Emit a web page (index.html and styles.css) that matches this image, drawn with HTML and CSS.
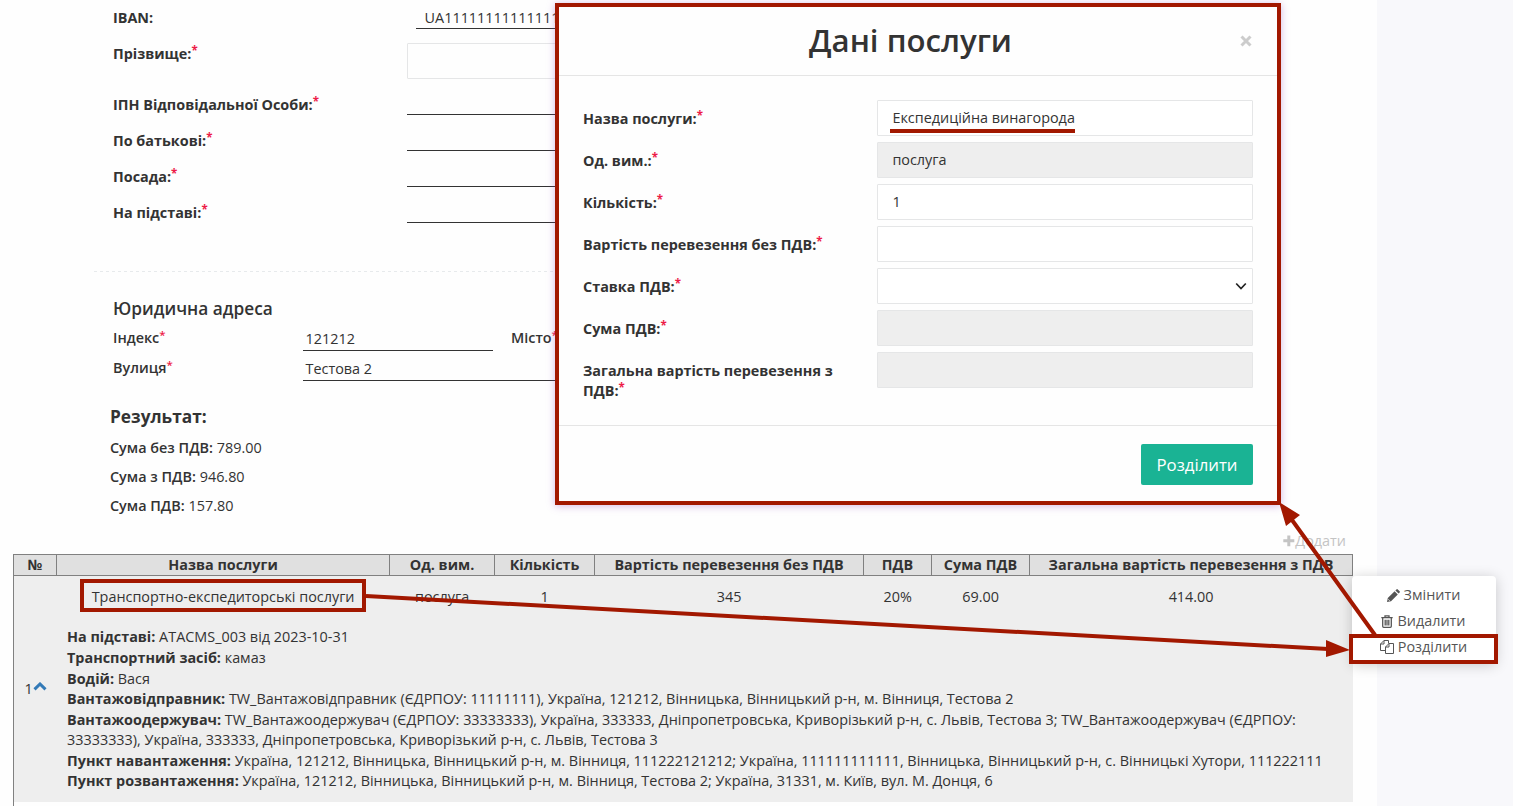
FILE: index.html
```html
<!DOCTYPE html>
<html lang="uk">
<head>
<meta charset="utf-8">
<title>Дані послуги</title>
<link rel="stylesheet" href="styles.css">
</head>
<body>
<main class="page">
  <section class="form">
    <div class="row"><b class="label">IBAN:</b><span class="field iban">UA111111111111111111111111111</span></div>
    <div class="row tall"><b class="label">Прізвище:<sup>*</sup></b><span class="field box"></span></div>
    <div class="row"><b class="label">ІПН Відповідальної Особи:<sup>*</sup></b><span class="field"></span></div>
    <div class="row"><b class="label">По батькові:<sup>*</sup></b><span class="field"></span></div>
    <div class="row"><b class="label">Посада:<sup>*</sup></b><span class="field"></span></div>
    <div class="row"><b class="label">На підставі:<sup>*</sup></b><span class="field"></span></div>
  </section>
  <div class="divider"></div>
  <section class="address">
    <h3>Юридична адреса</h3>
    <div class="addr-row"><span class="addr-label">Індекс<sup>*</sup></span><span class="addr-field short">121212</span><span class="addr-label city">Місто<sup>*</sup></span></div>
    <div class="addr-row"><span class="addr-label">Вулиця<sup>*</sup></span><span class="addr-field long">Тестова 2</span></div>
  </section>
  <section class="result">
    <h3>Результат:</h3>
    <p><b>Сума без ПДВ:</b> 789.00</p>
    <p><b>Сума з ПДВ:</b> 946.80</p>
    <p><b>Сума ПДВ:</b> 157.80</p>
  </section>
  <div class="add"><svg width="12" height="12" viewBox="0 0 12 12"><path d="M4.300 .5h3v3.800h4v3h-4v4h-3v-4h-4v-3h4z" fill="#c4c4c4"/></svg><span>Додати</span></div>
  <section class="table">
    <div class="thead cols">
      <span>№</span><span>Назва послуги</span><span>Од. вим.</span><span>Кількість</span><span>Вартість перевезення без ПДВ</span><span>ПДВ</span><span>Сума ПДВ</span><span>Загальна вартість перевезення з ПДВ</span>
    </div>
    <div class="tbody">
      <div class="num">1<svg width="14" height="9" viewBox="0 0 14 9"><path d="M1.500 7.300 7 2l5.500 5.300" fill="none" stroke="#337ab7" stroke-width="3"/></svg></div>
      <div class="content">
        <div class="values">
          <span>Транспортно-експедиторські послуги</span><span>послуга</span><span>1</span><span>345</span><span>20%</span><span>69.00</span><span>414.00</span>
        </div>
        <div class="details">
          <div><b>На підставі:</b> ATACMS_003 від 2023-10-31</div>
          <div><b>Транспортний засіб:</b> камаз</div>
          <div><b>Водій:</b> Вася</div>
          <div><b>Вантажовідправник:</b> TW_Вантажовідправник (ЄДРПОУ: 11111111), Україна, 121212, Вінницька, Вінницький р-н, м. Вінниця, Тестова 2</div>
          <div><b>Вантажоодержувач:</b> TW_Вантажоодержувач (ЄДРПОУ: 33333333), Україна, 333333, Дніпропетровська, Криворізький р-н, с. Львів, Тестова 3; TW_Вантажоодержувач (ЄДРПОУ:<br>33333333), Україна, 333333, Дніпропетровська, Криворізький р-н, с. Львів, Тестова 3</div>
          <div><b>Пункт навантаження:</b> Україна, 121212, Вінницька, Вінницький р-н, м. Вінниця, 111222121212; Україна, 111111111111, Вінницька, Вінницький р-н, с. Вінницькі Хутори, 111222111</div>
          <div><b>Пункт розвантаження:</b> Україна, 121212, Вінницька, Вінницький р-н, м. Вінниця, Тестова 2; Україна, 31331, м. Київ, вул. М. Донця, 6</div>
        </div>
      </div>
    </div>
    <div class="next-row"></div>
  </section>
</main>

<div class="menu">
  <div><svg width="13" height="13" viewBox="0 0 13 13"><path d="M0 13l.8-4L7.600 2.200l3.200 3.200L4 12.200zM8.400 1.400 9.400.4q.7-.6 1.400 0l1.800 1.800q.6.7 0 1.400l-1 1z" fill="#555"/><path d="M1.200 10.300l1.500 1.500" stroke="#fff" stroke-width=".8"/></svg><span>Змінити</span></div>
  <div><svg width="12" height="13" viewBox="0 0 12 13"><path d="M.3 2.700h11.400M4 2.500V.9h4v1.600M1.700 3v8.300q0 1 1 1h6.600q1 0 1-1V3M4.200 4.800v5.600M6 4.800v5.600M7.800 4.800v5.600" fill="none" stroke="#555" stroke-width="1.300"/></svg><span>Видалити</span></div>
  <div><svg width="14" height="14" viewBox="0 0 14 14"><path d="M5.500 10.500h-5V4L4 .5h4.500v3M4 .5V4H.5M9 3.500h4.500v10h-8V7zM9 3.500V7H5.500" fill="none" stroke="#555"/></svg><span>Розділити</span></div>
</div>

<div class="modal">
  <header><h1>Дані послуги</h1><svg class="close" width="12" height="12" viewBox="0 0 12 12"><path d="M1.500 1.500l9 9M10.500 1.500l-9 9" stroke="#ccc" stroke-width="3"/></svg></header>
  <div class="modal-body">
    <div class="mrow"><b>Назва послуги:<sup>*</sup></b><span class="input"><span class="marked">Експедиційна винагорода</span></span></div>
    <div class="mrow"><b>Од. вим.:<sup>*</sup></b><span class="input off">послуга</span></div>
    <div class="mrow"><b>Кількість:<sup>*</sup></b><span class="input">1</span></div>
    <div class="mrow"><b>Вартість перевезення без ПДВ:<sup>*</sup></b><span class="input"></span></div>
    <div class="mrow"><b>Ставка ПДВ:<sup>*</sup></b><span class="input select"><svg width="12" height="8" viewBox="0 0 12 8"><path d="M1.200 1.500 6 6.500l4.800-5" fill="none" stroke="#222" stroke-width="1.700"/></svg></span></div>
    <div class="mrow"><b>Сума ПДВ:<sup>*</sup></b><span class="input off"></span></div>
    <div class="mrow"><b>Загальна вартість перевезення з ПДВ:<sup>*</sup></b><span class="input off"></span></div>
  </div>
  <footer><button>Розділити</button></footer>
</div>

<svg class="marks" width="1513" height="806" viewBox="0 0 1513 806">
  <g fill="none" stroke="#a21800" stroke-width="4">
    <rect x="82" y="581" width="282" height="29"/>
    <rect x="1351" y="636" width="145" height="26"/>
    <path d="M366 596 1328 649M1375 635 1292 520"/>
  </g>
  <path d="M1350 650l-24-10v17zM1279 502l21 13-14 11z" fill="#a21800"/>
</svg>
</body>
</html>
```

FILE: styles.css
```css
* { box-sizing: border-box; }
body {
  margin: 0;
  width: 1513px;
  height: 806px;
  overflow: hidden;
  position: relative;
  background: #f8f8fb;
  color: #333;
  font: 14.4px/20px "Open Sans", sans-serif;
}
h1, h3, p { margin: 0; }
b { font-weight: 700; }
sup { color: #ed1c48; font-size: 80%; line-height: 0; position: relative; top: -.38em; vertical-align: baseline; }
.page { width: 1377px; height: 806px; background: #fefefe; overflow: hidden; }

.form { height: 271px; padding-left: 113px; }
.row { display: flex; height: 36px; }
.row.tall { height: 51px; }
.label { width: 294px; padding-top: 8px; }
.field { width: 400px; height: 28px; border-bottom: 1px solid #333; }
.field.iban { height: 29px; margin-left: 9px; padding: 8px 0 0 8.600px; }
.field.box { height: 36px; margin-top: 7px; border: 1px solid #e5e6e7; border-radius: 1px; }
.divider { width: 900px; height: 1px; margin-left: 94px; background: repeating-linear-gradient(90deg, #e7eaec 0 3px, transparent 3px 6px); }

.address { height: 135px; padding: 25px 0 0 113px; }
.address h3, .result h3 { font-size: 17.280px; line-height: 24px; font-weight: 600; }
.addr-row { display: flex; height: 30px; }
.addr-label { width: 190px; padding-top: 7px; font-weight: 600; }
.addr-label.city { width: 80px; margin-left: 18px; }
.addr-field { height: 30px; padding: 8px 0 0 2.500px; border-bottom: 1px solid #333; }
.short { width: 190px; }
.long { width: 500px; }

.result { height: 123px; padding-left: 110px; }
.result h3 { font-weight: 700; height: 26px; margin-top: -2px; }
.result p { height: 29px; line-height: 29px; }
.result p:first-of-type { margin-top: 2px; }
.result b { font-weight: 600; }
.add { display: flex; height: 26px; padding: 1px 31px 2px 0; align-items: center; justify-content: flex-end; color: #c4c4c4; }

.table { width: 1340px; margin-left: 13px; }
.cols { display: grid; grid-template-columns: 43px 333px 105px 100px 269px 68px 98px 324px; }
.thead { height: 22px; background: #e0e0e0; border: 1px solid #808080; border-left: 0; font-weight: 700; line-height: 20px; text-align: center; }
.thead span { border-left: 1px solid #808080; white-space: nowrap; }
.thead span:last-child { padding-right: 1px; }
.tbody { display: grid; grid-template-columns: 43px 1fr; height: 226px; background: #eee; border-left: 1px solid #808080; }
.num { display: flex; align-items: center; justify-content: center; }
.num svg { margin-top: -5px; }
.values { display: grid; grid-template-columns: 333px 105px 100px 269px 68px 98px 323px; height: 51.400px; padding-top: 11px; text-align: center; }
.values span { padding-right: .8px; }
.details { padding-left: 10px; line-height: 20.570px; white-space: nowrap; }
.next-row { height: 10px; border-left: 1px solid #808080; }

.menu { position: absolute; left: 1352px; top: 576px; width: 144px; height: 87px; padding: 6px 1px 0 0; border-radius: 4px; background: #fff; box-shadow: 0 2px 14px rgba(0,0,0,.2); color: #555; }
.menu div { display: flex; height: 26px; align-items: center; justify-content: center; gap: 4px; }
.menu div:last-child { height: 25px; }

.modal { position: absolute; left: 555px; top: 3px; width: 726px; height: 502px; border: 4px solid #a21800; background: #fefefe; box-shadow: 0 1px 8px rgba(150,80,190,.4); }
.modal header { position: relative; height: 69px; border-bottom: 1px solid #e5e5e5; text-align: center; }
.modal h1 { padding: 11px 15px 0 0; font-size: 31.200px; line-height: 44px; font-weight: 600; }
.close { position: absolute; right: 25.500px; top: 28px; }
.modal-body { height: 350px; padding: 24px 24px 0; border-bottom: 1px solid #e5e5e5; }
.mrow { display: flex; height: 42px; justify-content: space-between; }
.mrow b { width: 264px; padding-top: 9px; }
.input { display: flex; width: 376px; height: 36px; align-items: center; padding: 0 14.400px; border: 1px solid #e5e6e7; border-radius: 1px; background: #fff; }
.input.off { background: #eee; }
.select { justify-content: flex-end; padding-right: 5px; }
.marked { position: relative; }
.marked::after { content: ""; position: absolute; left: -2.400px; right: 0; top: 21px; height: 4px; background: #a21800; }
.modal footer { display: flex; justify-content: flex-end; padding: 18px 24px; }
.modal button { width: 112px; height: 41px; padding: 0; border: 0; border-radius: 2px; background: #1ab394; color: #fff; font: 16.800px "Open Sans", sans-serif; }
.marks { position: absolute; left: 0; top: 0; pointer-events: none; }
```
